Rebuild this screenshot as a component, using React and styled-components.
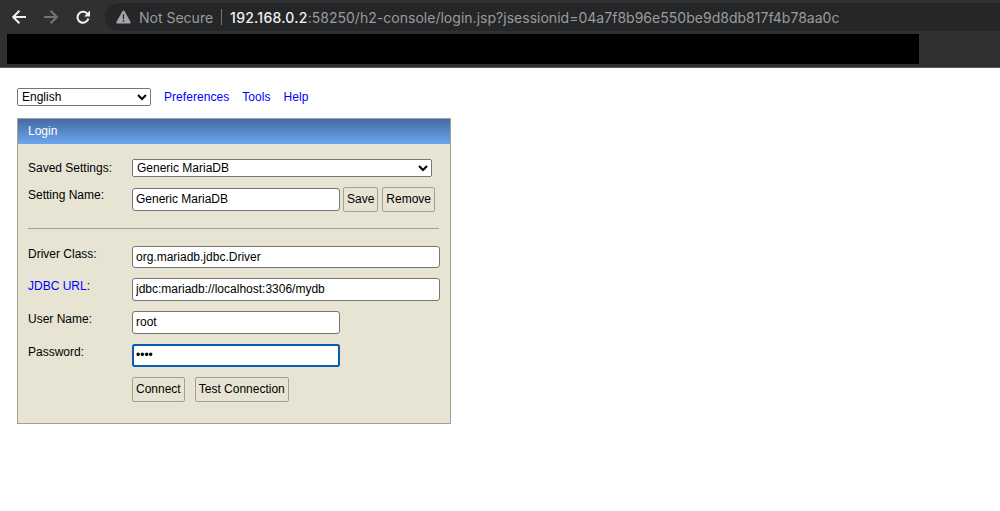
import React from "react";
import styled, { createGlobalStyle } from "styled-components";

const Global = createGlobalStyle`
  html, body {
    margin: 0;
    padding: 0;
    background: #fff;
    overflow: hidden;
  }
  * {
    box-sizing: border-box;
  }
`;

const BackIcon = () => (
  <svg width="14" height="14" viewBox="0 0 14 14" fill="none" stroke="#f2f2f2" strokeWidth="2">
    <path d="M14 7H1.4M7.4.7 1.2 7l6.2 6.3" />
  </svg>
);

const ForwardIcon = () => (
  <svg width="14" height="14" viewBox="0 0 14 14" fill="none" stroke="#747474" strokeWidth="2">
    <path d="M0 7h12.6M6.6.7 12.8 7l-6.2 6.3" />
  </svg>
);

const ReloadIcon = () => (
  <svg width="14" height="14" viewBox="0 0 14 14" fill="none">
    <path d="M12.4 8.6A5.5 5.5 0 1 1 11 3.4L12.4 5" stroke="#f2f2f2" strokeWidth="2" />
    <path d="M14 .6v5.9H8.1z" fill="#f2f2f2" />
  </svg>
);

const WarnIcon = () => (
  <svg width="15" height="14" viewBox="0 0 15 14">
    <path d="M7.5.5c.4 0 .7.2.9.6l6.2 11c.4.7 0 1.4-.8 1.4H1.2c-.8 0-1.2-.7-.8-1.4l6.2-11c.2-.4.5-.6.9-.6z" fill="#a3a5a8" />
    <path d="M6.8 4.2h1.4l-.1 5H6.9zM6.8 10.2h1.4v1.5H6.8z" fill="#292a2d" />
  </svg>
);

const App = () => {
  return (
    <>
      <Global />
      <Chrome>
        <Toolbar>
          <NavButtons>
            <BackIcon />
            <ForwardIcon />
            <ReloadIcon />
          </NavButtons>
          <AddressBar>
            <WarnIcon />
            <NotSecure>Not Secure</NotSecure>
            <Divider />
            <Url>
              <Host>192.168.0.2</Host>:58250/h2-console/login.jsp?jsessionid=04a7f8b96e550be9d8db817f4b78aa0c
            </Url>
          </AddressBar>
        </Toolbar>
        <Bookmarks>
          <Redacted />
        </Bookmarks>
      </Chrome>
      <Page>
        <TopBar>
          <LanguageSelect defaultValue="English">
            <option>English</option>
          </LanguageSelect>
          <TopLink href="#">Preferences</TopLink>
          <TopLink href="#">Tools</TopLink>
          <TopLink href="#">Help</TopLink>
        </TopBar>
        <Panel>
          <PanelHeader>Login</PanelHeader>
          <PanelBody>
            <Row>
              <Label $offset={2}>Saved Settings:</Label>
              <SettingsSelect defaultValue="Generic MariaDB">
                <option>Generic MariaDB</option>
              </SettingsSelect>
            </Row>
            <Row $top={11}>
              <Label $offset={0}>Setting Name:</Label>
              <TextInput $short defaultValue="Generic MariaDB" />
              <Button $left={3}>Save</Button>
              <Button $left={4}>Remove</Button>
            </Row>
            <Rule />
            <Row>
              <Label>Driver Class:</Label>
              <TextInput $height={22} defaultValue="org.mariadb.jdbc.Driver" />
            </Row>
            <Row $top={10}>
              <Label>
                <LabelLink href="#">JDBC URL</LabelLink>:
              </Label>
              <TextInput defaultValue="jdbc:mariadb://localhost:3306/mydb" />
            </Row>
            <Row $top={10}>
              <Label>User Name:</Label>
              <TextInput $short defaultValue="root" />
            </Row>
            <Row $top={10}>
              <Label>Password:</Label>
              <TextInput $short $focused type="password" defaultValue="root" />
            </Row>
            <Row $top={11}>
              <Label />
              <Button>Connect</Button>
              <Button $left={10}>Test Connection</Button>
            </Row>
          </PanelBody>
        </Panel>
      </Page>
    </>
  );
};

export default App;

const Chrome = styled.header`
  height: 68px;
  background: #303030;
  border-bottom: 1px solid #585858;
`;

const Toolbar = styled.div`
  height: 34px;
  display: flex;
  align-items: center;
`;

const NavButtons = styled.div`
  width: 105px;
  padding-left: 12px;
  display: flex;
  align-items: center;
  gap: 18px;
`;

const AddressBar = styled.div`
  flex: 1;
  height: 28px;
  padding-left: 11px;
  background: #252627;
  border-radius: 14px 0 0 14px;
  display: flex;
  align-items: center;
  font-family: "Inter", "Liberation Sans", sans-serif;
  font-size: 14px;
`;

const NotSecure = styled.span`
  margin-left: 8px;
  color: #9a9c9f;
`;

const Divider = styled.span`
  width: 1px;
  height: 16px;
  margin: 0 8px;
  background: #717275;
`;

const Url = styled.span`
  color: #9a9c9f;
  white-space: nowrap;
  letter-spacing: 0.02px;
`;

const Host = styled.span`
  color: #f1f1f1;
  font-weight: 500;
  letter-spacing: 0.25px;
`;

const Bookmarks = styled.div`
  height: 30px;
  padding-left: 7px;
`;

const Redacted = styled.div`
  width: 912px;
  height: 30px;
  background: #000;
`;

const Page = styled.main`
  padding: 20px 17px 0;
  font-family: "Liberation Sans", Arial, sans-serif;
  font-size: 12px;
  color: #000;
`;

const TopBar = styled.nav`
  height: 18px;
  display: flex;
  align-items: center;
  gap: 13px;
`;

const TopLink = styled.a`
  color: #0000ff;
  text-decoration: none;
  letter-spacing: 0.05px;
`;

const LanguageSelect = styled.select`
  width: 134px;
  height: 18px;
  font: 12px "Liberation Sans", Arial, sans-serif;
`;

const Panel = styled.section`
  width: 434px;
  height: 306px;
  margin-top: 12px;
  border: 1px solid #a3a294;
  background: #e7e4d4;
`;

const PanelHeader = styled.div`
  height: 25px;
  padding: 5px 10px;
  color: #fff;
  background: linear-gradient(#446ba5, #6ca7ec);
`;

const PanelBody = styled.div`
  padding: 15px 10px 0;
`;

const Row = styled.div`
  display: flex;
  align-items: flex-start;
  margin-top: ${(p) => p.$top || 0}px;
`;

const Label = styled.label`
  flex: none;
  width: 104px;
  padding-top: ${(p) => p.$offset ?? 1}px;
`;

const LabelLink = styled.a`
  color: #0000ff;
  text-decoration: none;
`;

const SettingsSelect = styled.select`
  width: 300px;
  height: 18px;
  font: 12px "Liberation Sans", Arial, sans-serif;
`;

const TextInput = styled.input`
  width: ${(p) => (p.$short ? 208 : 308)}px;
  height: ${(p) => p.$height || 23}px;
  padding: ${(p) => (p.$height ? "1px 3px" : "0 3px 2px")};
  font: 12px "Liberation Sans", Arial, sans-serif;
  color: #000;
  background: #fff;
  border: 1px solid #767676;
  border-radius: 3px;
  ${(p) => p.$focused && "outline: 2px solid #0a5bb5; outline-offset: -2px; border-color: #0a5bb5;"}
`;

const Button = styled.button`
  height: 25px;
  margin-top: -1px;
  margin-left: ${(p) => p.$left || 0}px;
  padding: 0 3px 2px;
  font: 12px "Liberation Sans", Arial, sans-serif;
  color: #000;
  background: #e7e4d4;
  border: 1px solid #a3a294;
  border-radius: 2px;
`;

const Rule = styled.hr`
  height: 1px;
  margin: 16px 1px 17px 0;
  border: 0;
  background: #a09f96;
`;
